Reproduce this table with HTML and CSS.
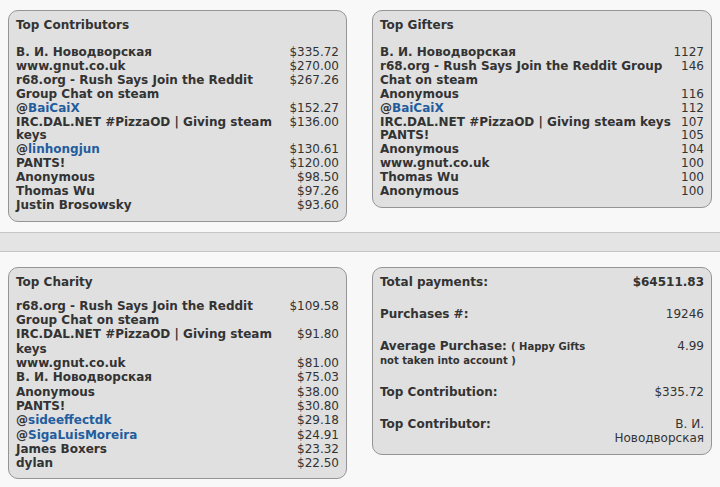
FILE: index.html
```html
<!DOCTYPE html>
<html>
<head>
<meta charset="utf-8">
<link rel="stylesheet" href="styles.css">
</head>
<body>
<div class="row top">
  <div class="col left">
    <div class="box">
      <div class="title">Top Contributors</div>
      <div class="list">
        <div class="name">В. И. Новодворская</div><div class="amt">$335.72</div>
        <div class="name">www.gnut.co.uk</div><div class="amt">$270.00</div>
        <div class="name">r68.org - Rush Says Join the Reddit Group Chat on steam</div><div class="amt">$267.26</div>
        <div class="name">@<span class="link">BaiCaiX</span></div><div class="amt">$152.27</div>
        <div class="name">IRC.DAL.NET #PizzaOD | Giving steam keys</div><div class="amt">$136.00</div>
        <div class="name">@<span class="link">linhongjun</span></div><div class="amt">$130.61</div>
        <div class="name">PANTS!</div><div class="amt">$120.00</div>
        <div class="name">Anonymous</div><div class="amt">$98.50</div>
        <div class="name">Thomas Wu</div><div class="amt">$97.26</div>
        <div class="name">Justin Brosowsky</div><div class="amt">$93.60</div>
      </div>
    </div>
  </div>
  <div class="col right">
    <div class="box gifters">
      <div class="title">Top Gifters</div>
      <div class="list">
        <div class="name">В. И. Новодворская</div><div class="amt">1127</div>
        <div class="name">r68.org - Rush Says Join the Reddit Group Chat on steam</div><div class="amt">146</div>
        <div class="name">Anonymous</div><div class="amt">116</div>
        <div class="name">@<span class="link">BaiCaiX</span></div><div class="amt">112</div>
        <div class="name">IRC.DAL.NET #PizzaOD | Giving steam keys</div><div class="amt">107</div>
        <div class="name">PANTS!</div><div class="amt">105</div>
        <div class="name">Anonymous</div><div class="amt">104</div>
        <div class="name">www.gnut.co.uk</div><div class="amt">100</div>
        <div class="name">Thomas Wu</div><div class="amt">100</div>
        <div class="name">Anonymous</div><div class="amt">100</div>
      </div>
    </div>
  </div>
</div>
<div class="band"></div>
<div class="row bottom">
  <div class="col left">
    <div class="box">
      <div class="title charity-title">Top Charity</div>
      <div class="list charity">
        <div class="name">r68.org - Rush Says Join the Reddit Group Chat on steam</div><div class="amt">$109.58</div>
        <div class="name">IRC.DAL.NET #PizzaOD | Giving steam keys</div><div class="amt">$91.80</div>
        <div class="name">www.gnut.co.uk</div><div class="amt">$81.00</div>
        <div class="name">В. И. Новодворская</div><div class="amt">$75.03</div>
        <div class="name">Anonymous</div><div class="amt">$38.00</div>
        <div class="name">PANTS!</div><div class="amt">$30.80</div>
        <div class="name">@<span class="link">sideeffectdk</span></div><div class="amt">$29.18</div>
        <div class="name">@<span class="link">SigaLuisMoreira</span></div><div class="amt">$24.91</div>
        <div class="name">James Boxers</div><div class="amt">$23.32</div>
        <div class="name">dylan</div><div class="amt">$22.50</div>
      </div>
    </div>
  </div>
  <div class="col right">
    <div class="box stats">
      <div class="label">Total payments:</div><div class="val strong">$64511.83</div>
      <div class="label">Purchases #:</div><div class="val">19246</div>
      <div class="label">Average Purchase: <span class="note">( Happy Gifts not taken into account )</span></div><div class="val">4.99</div>
      <div class="label">Top Contribution:</div><div class="val">$335.72</div>
      <div class="label">Top Contributor:</div><div class="val">В. И. Новодворская</div>
    </div>
  </div>
</div>
</body>
</html>
```
FILE: styles.css
```css
html, body {
  margin: 0;
  padding: 0;
  background: #f8f8f8;
}
body {
  font-family: "DejaVu Sans", Verdana, sans-serif;
  font-size: 12px;
  color: #333;
  width: 720px;
  height: 487px;
  overflow: hidden;
}
.row {
  display: grid;
  grid-template-columns: 360px 360px;
  align-items: start;
}
.row.top { padding-top: 10px; }
.row.bottom { padding-top: 15px; }
.col.left { padding: 0 13px 0 8px; }
.col.right { padding: 0 8px 0 12px; }
.box {
  background: #e0e0e0;
  border: 1px solid #959595;
  border-radius: 10px;
  padding: 6px 7px 8px 7px;
}
.title {
  font-weight: bold;
  line-height: 16px;
  margin-bottom: 13px;
}
.title.charity-title { margin-bottom: 9px; }
.list {
  display: grid;
  grid-template-columns: 1fr auto;
  column-gap: 6px;
  line-height: 13.9px;
}
.list.charity { line-height: 14.3px; }
.gifters .list { column-gap: 0; }
.gifters { padding-right: 7px; }
.name { font-weight: bold; }
.amt { text-align: right; }
.link { color: #1f5d9e; }
.band {
  margin-top: 10px;
  height: 18px;
  background: #e4e4e4;
  border-top: 1px solid #c4c4c4;
  border-bottom: 1px solid #c4c4c4;
}
.stats {
  display: grid;
  grid-template-columns: 1fr 90px;
  row-gap: 18px;
  line-height: 14px;
  padding-top: 7px;
  padding-bottom: 9px;
}
.label { font-weight: bold; padding-right: 20px; }
.val { text-align: right; }
.val.strong { font-weight: bold; }
.note { font-size: 10px; line-height: 10px; }
```
